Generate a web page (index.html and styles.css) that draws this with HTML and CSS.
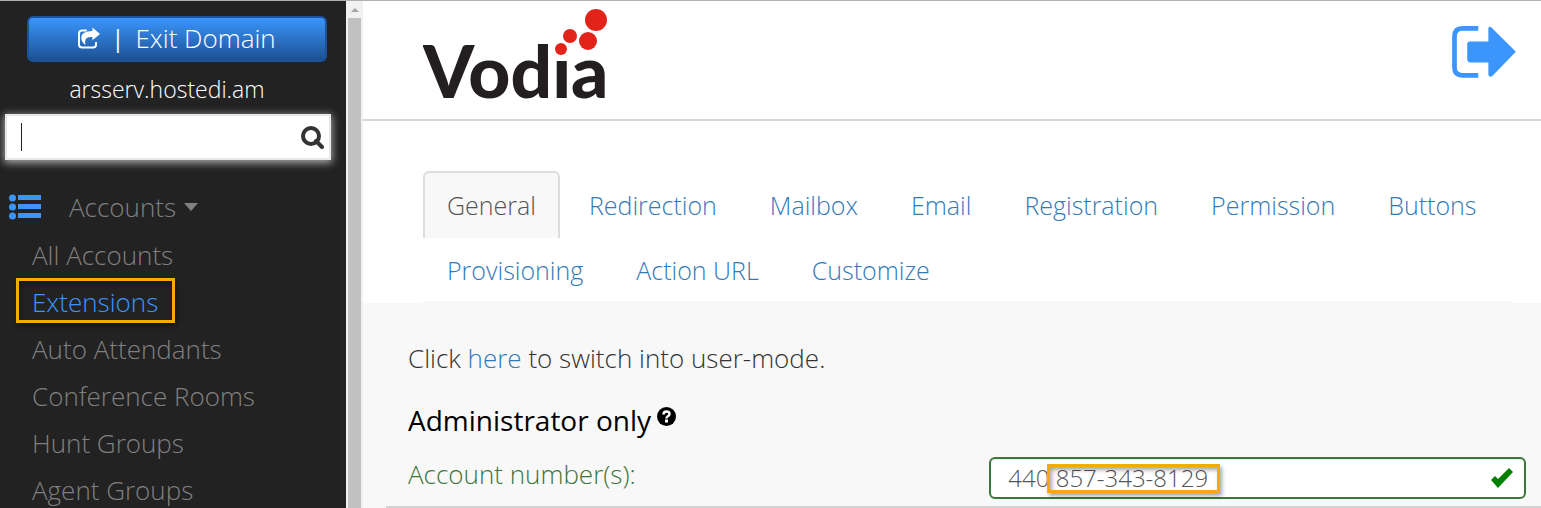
FILE: index.html
```
<!DOCTYPE html>
<html lang="en">
<head>
  <meta charset="UTF-8" />
  <title>Vodia - Extensions</title>
  <link rel="stylesheet" href="styles.css">
</head>
<body>
  <div class="page">
    <aside class="sidebar">
      <button type="button" class="exit-btn">
        <svg width="22" height="22" viewBox="237 80 67 66" aria-hidden="true">
          <path d="M264 90H250Q240 90 240 99V133Q240 142 250 142H283Q292 142 292 133V125" fill="none" stroke="#fff" stroke-width="6"/>
          <path d="M281 81L304 101L281 120V110Q264 108 260 118Q257 124 260 134Q247 126 247 112Q248 92 281 92Z" fill="#fff"/>
        </svg>
        <span class="bar">|</span>
        <span>Exit Domain</span>
      </button>
      <div class="domain">arsserv.hostedi.am</div>

      <div class="search">
        <input type="text" class="search-input" aria-label="Search">
        <span class="cursor"></span>
        <svg width="23" height="23" viewBox="0 0 23 23" aria-hidden="true">
          <circle cx="10" cy="10" r="8" fill="none" stroke="#333" stroke-width="4"/>
          <path d="M15 15L21 21" stroke="#333" stroke-width="4" stroke-linecap="round"/>
        </svg>
      </div>

      <nav class="menu">
        <a href="#" class="menu-head">
          <svg width="33" height="26" viewBox="0 0 33 26" fill="#3b95fb" aria-hidden="true">
            <circle cx="3.5" cy="4" r="3.5"/><rect x="9" y="1" width="23" height="5"/>
            <circle cx="3.5" cy="13" r="3.5"/><rect x="9" y="10" width="23" height="5"/>
            <circle cx="3.5" cy="22" r="3.5"/><rect x="9" y="19" width="23" height="5"/>
          </svg>
          <span>Accounts</span>
          <i class="caret"></i>
        </a>
        <ul class="menu-list">
          <li><a href="#">All Accounts</a></li>
          <li><a href="#" class="active">Extensions</a></li>
          <li><a href="#">Auto Attendants</a></li>
          <li><a href="#">Conference Rooms</a></li>
          <li><a href="#">Hunt Groups</a></li>
          <li><a href="#">Agent Groups</a></li>
        </ul>
      </nav>
    </aside>

    <div class="scrollbar"><i class="scroll-up"></i><div class="scroll-thumb"></div></div>

    <main class="main">
      <header class="header">
        <svg class="logo" width="190" height="110" viewBox="0 0 190 110" role="img" aria-label="Vodia">
          <text x="0" y="91" class="logo-text">Vodia</text>
          <rect class="logo-gap" x="128" y="28" width="20" height="23"/>
          <g fill="#e2231a">
            <circle cx="138" cy="42" r="6"/>
            <circle cx="147" cy="29" r="7"/>
            <circle cx="165" cy="34" r="9"/>
            <circle cx="173" cy="13" r="11"/>
          </g>
        </svg>
        <a href="#" class="logout" aria-label="Log out">
          <svg width="64" height="52" viewBox="66 50 190 155" aria-hidden="true">
            <path d="M144 57H97Q73 57 73 81V174Q73 197 97 197H144" fill="none" stroke="#3b95fb" stroke-width="14"/>
            <path d="M119 96H174V58Q174 49 184 55L256 127L185 200Q174 204 174 194V159H121Q111 157 111 149V104Q111 96 119 96Z" fill="#3b95fb"/>
          </svg>
        </a>
      </header>

      <ul class="tabs">
        <li><a href="#" class="current">General</a></li>
        <li><a href="#">Redirection</a></li>
        <li><a href="#">Mailbox</a></li>
        <li><a href="#">Email</a></li>
        <li><a href="#">Registration</a></li>
        <li><a href="#">Permission</a></li>
        <li><a href="#">Buttons</a></li>
        <li><a href="#">Provisioning</a></li>
        <li><a href="#">Action URL</a></li>
        <li><a href="#">Customize</a></li>
      </ul>

      <section class="panel">
        <p>Click <a href="#">here</a> to switch into user-mode.</p>
        <h4>Administrator only
          <svg width="19" height="19" viewBox="0 0 19 19" aria-hidden="true">
            <circle cx="9.5" cy="9.5" r="9.5"/>
            <path d="M6.5 7.5Q6.5 4.5 9.5 4.5Q12.5 4.5 12.5 7Q12.5 8.5 10.5 9.5Q9.5 10 9.5 11.5" fill="none" stroke="#fff" stroke-width="2.5"/>
            <rect x="8" y="12.5" width="3" height="3" fill="#fff"/>
          </svg>
        </h4>
        <div class="form-row">
          <label for="account">Account number(s):</label>
          <div class="field">
            <input type="text" id="account" value="440 857-343-8129">
            <span class="mark"></span>
            <svg width="24" height="22" viewBox="0 0 24 22" aria-hidden="true">
              <path d="M1 13L5 9L8 12L19 1L23 5L8 21Z" fill="#008000"/>
            </svg>
          </div>
        </div>
      </section>
    </main>
  </div>
</body>
</html>
```
FILE: styles.css
```
* {box-sizing:border-box}
body {margin:0; font-family:"Open Sans", sans-serif; font-size:26px; font-weight:300; line-height:34px; color:#333; background:#fff}
a    {color:#337ab7; text-decoration:none}
ul   {list-style:none; margin:0; padding:0}
p,h4 {margin:0}
svg  {display:block; flex:none}
input{font:inherit; outline:none}

.page {display:flex; min-height:100vh; border-top:1px solid #b0b0b0}

.sidebar {flex:0 0 346px; min-width:0; background:#222}
.exit-btn {
  display:flex; align-items:center; justify-content:center; gap:11px;
  width:300px; height:46px; margin:15px 0 0 27px; padding:0 0 2px;
  font:inherit; color:#fff;
  border:2px solid #1a539b; border-radius:6px;
  background:linear-gradient(#3b95fb, #1c5194);
}
.bar {font-size:24px; font-weight:400}
.domain {margin:10px 12px 0 0; text-align:center; font-size:23px; color:#fff}

.search {position:relative; display:flex; align-items:center; height:46px; margin:8px 15px 0 5px; padding:0 5px 0 16px; background:#fff; border:2px solid #e8e8e8; box-shadow:0 2px 8px 1px #aaa}
.search-input {flex:1; min-width:0; border:0; padding:0; background:none}
.cursor {position:absolute; left:14px; top:7px; width:1px; height:28px; background:#222}

.menu {margin-top:30px}
.menu a {color:#808080}
.menu-head {display:flex; align-items:center; padding-left:9px}
.menu-head span {margin:0 8px 0 27px}
.caret {border:7px solid transparent; border-top:8px solid #808080; border-bottom:0}
.menu-list {display:grid; gap:13px; margin:14px 0 0 32px}
.menu-list a {position:relative; display:inline-block; vertical-align:top}
.menu-list .active {color:#3b95fb}
.active::after {content:""; position:absolute; inset:-7px -17px -4px -16px; border:3px solid #faa90b; box-shadow:2px 3px 5px rgba(0,0,0,.4), inset 2px 3px 5px rgba(0,0,0,.3)}

.scrollbar {display:flex; flex-direction:column; align-items:center; flex:0 0 17px; background:#f1f1f1}
.scroll-up {margin:7px 0 6px; border:4px solid transparent; border-bottom:4px solid #a3a3a3; border-top:0}
.scroll-thumb {flex:1; width:13px; background:#c1c1c1}

.main {flex:1; min-width:0; display:flex; flex-direction:column}
.header {display:flex; justify-content:space-between; align-items:flex-start; height:120px; padding:6px 25px 0 60px; border-bottom:2px solid #d8d8d8}
.logo-text {font:900 73px Lato, sans-serif; fill:#231f20}
.logo-gap {fill:#fff}
.logout {margin-top:19px}

.tabs {display:flex; flex-wrap:wrap; column-gap:5px; margin:50px 29px 0 60px; border-bottom:2px solid #f7f7f7; font-size:25px}
.tabs li {margin-bottom:-2px}
.tabs a {display:block; padding:15px 22px 16px; border:2px solid transparent; border-bottom:0; border-radius:6px 6px 0 0}
.tabs .current {color:#555; background:#f8f8f8; border-color:#ddd}

.panel {flex:1; padding:38px 0 0 23px; background:#f8f8f8}
.panel p,.panel h4 {padding-left:22px}
.panel h4 {display:flex; align-items:flex-start; gap:6px; margin-top:28px; font-size:28px; font-weight:500; color:#000}
.panel h4 svg {margin-top:4px}
.form-row {display:grid; grid-template-columns:52fr 48fr; margin-top:20px; padding:0 15px 7px 22px; border-bottom:2px solid #d3d3d3; color:#3c763d}
.field {position:relative; display:flex; align-items:center; height:42px}
.field input {width:100%; height:100%; padding:0 50px 2px 17px; font-size:24px; color:#555; background:#fff; border:2px solid #3c763d; border-radius:6px; box-shadow:inset 0 1px 1px rgba(0,0,0,.08)}
.field svg {position:absolute; right:12px}
.mark {position:absolute; left:58px; top:7px; width:173px; height:29px; border:3px solid #faa90b; box-shadow:2px 3px 4px rgba(0,0,0,.35), inset 2px 3px 4px rgba(0,0,0,.35)}
```
